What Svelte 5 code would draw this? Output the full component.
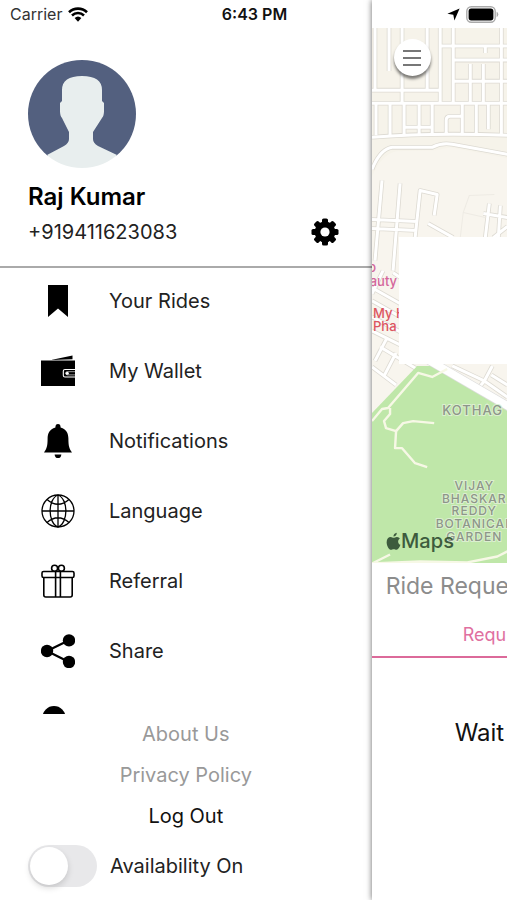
<script lang="ts">
  const menu = [
    { id: 'rides', label: 'Your Rides' },
    { id: 'wallet', label: 'My Wallet' },
    { id: 'notifications', label: 'Notifications' },
    { id: 'language', label: 'Language' },
    { id: 'referral', label: 'Referral' },
    { id: 'share', label: 'Share' },
    { id: 'support', label: '' },
  ];

  const streets = [
    // upper blocks
    'M3 0V62M17 0V43M30 0V75M55 0V62M68 0V75M81 0V75M129 0V107M98 36V75M111 36V75M113 18V25',
    'M0 62H68M68 18H135M81 32H135M81 53H135M0 75H135',
    'M4 75V107M18 75V107M32 75V107M47 75V107M60 75V107M90 75V107M104 75V107M116 75V101',
    'M32 99H60M74 107V92Q74 88 78 88H90M0 109Q60 104 135 107',
    'M0 141Q8 121 20 119L60 119Q70 114 80 116L135 126',
    // middle blocks
    'M10 152L3 232M28 155L21 242M0 191L45 193M0 200L45 202M43 209L48 162L65 166L62 187M56 195L81 209',
    'M117 175L113 209M128 177L126 209M111 185L135 189M135 198L121 209',
    // lower left blocks
    'M11 242L0 265M21 244L30 250M0 259L30 276M0 272L30 289M0 288L30 304M0 302L30 317M15 309L3 332M8 318L48 342M0 338L24 356M24 324L12 347',
    // beyond the highway
    'M80 337L112 352L135 368M120 337L112 352M112 352L104 362M119 346L135 356',
  ];
  const trails = [
    'M0 392L10 380L16 379L46 344L60 348L75 340',
    'M18 379V385L12 392L14 399L24 402L31 394L41 392L62 394',
    'M24 402L23 419H30L43 434L55 438',
    'M0 534L48 532L95 533L125 527L135 522M0 534L18 525',
  ];

  let available = $state(false);
</script>

<div class="screen">
  <header class="status">
    <div class="status-left">
      <span>Carrier</span>
      <svg width="20" height="15" viewBox="0 0 20 15" aria-hidden="true">
        <path d="M1 5.2a13 13 0 0 1 18 0" fill="none" stroke="#000" stroke-width="2.6" />
        <path d="M4 8.5a8.6 8.6 0 0 1 12 0" fill="none" stroke="#000" stroke-width="2.5" />
        <path d="M6.6 11.1a5 5 0 0 1 6.8 0L10 14.7z" />
      </svg>
    </div>
    <time>6:43 PM</time>
    <div class="status-right">
      <svg width="13" height="13" viewBox="0 0 13 13" aria-hidden="true">
        <path d="M12.6.4 7.4 12.6 6.3 6.8.4 5.8z" />
      </svg>
      <svg width="33" height="17" viewBox="0 0 33 17" aria-hidden="true">
        <rect x=".8" y=".8" width="28.4" height="15.4" rx="4.5" fill="#fff" stroke="#aaa" stroke-width="1.4" />
        <rect x="2.6" y="2.6" width="24.8" height="11.8" rx="2.6" />
        <path d="M30.6 5.8a3 3 0 0 1 0 5.4z" fill="#aaa" />
      </svg>
    </div>
  </header>

  <aside class="drawer">
    <section class="profile">
      <svg class="avatar" viewBox="0 0 108 108" role="img" aria-label="Profile photo">
        <clipPath id="round"><circle cx="54" cy="54" r="54" /></clipPath>
        <g clip-path="url(#round)">
          <path d="M0 0H108V96H0z" fill="#53607f" />
          <path
            d="M0 108V103L19 95 36 86Q41 83 41 79V72L34 58Q32 56 32 51V43L34 41V30Q34 16 54 16T74 30V41L76 43V51Q76 56 74 58L65 72V79Q65 83 70 86L89 95 108 103V108Z"
            fill="#e8eeee"
          />
        </g>
      </svg>
      <h1>Raj Kumar</h1>
      <div class="phone-row">
        <span>+919411623083</span>
        <button class="gear" aria-label="Settings">
          <svg width="28" height="28" viewBox="-14 -14 28 28">
            {#each [0, 45, 90, 135] as a}
              <rect x="-3" y="-13.5" width="6" height="27" rx="1.6" transform="rotate({a})" />
            {/each}
            <circle r="10.4" />
            <circle r="4.6" fill="#fff" />
          </svg>
        </button>
      </div>
    </section>

    <nav class="menu">
      {#each menu as item}
        <a href="#{item.id}" aria-label={item.label || 'Support'}>
          <svg class="icon" viewBox="0 0 34 34" aria-hidden="true">
            {#if item.id === 'rides'}
              <path d="M7 1H27V33L17 24.5 7 33z" />
            {:else if item.id === 'wallet'}
              <path d="M10 6 31.5 1.5V5.2zM0 6.5H34V32H0z" />
              <path d="M34 15.5H24Q22.3 15.5 22.3 17V21.5Q22.3 23 24 23H34" fill="none" stroke="#fff" stroke-width="1.1" />
              <path d="M34 17.7H26.5Q24.5 17.7 24.5 19.2T26.5 20.9H34" fill="none" stroke="#fff" stroke-width=".6" />
              <circle cx="26.3" cy="19.3" r="1.5" fill="#fff" />
            {:else if item.id === 'notifications'}
              <path d="M17 0Q19.6 0 19.6 3.4C25.5 5 27.4 9.5 27.4 14.5 27.4 22 28.2 24.5 31 28.6H3C5.8 24.5 6.6 22 6.6 14.5 6.6 9.5 8.5 5 14.4 3.4Q14.4 0 17 0z" />
              <path d="M13.6 30.4H20.4Q20 34 17 34T13.6 30.4z" />
            {:else if item.id === 'language'}
              <g fill="none" stroke="#000" stroke-width="1.3">
                <circle cx="17" cy="17" r="16" />
                <path d="M17 1V33M1 17H33M17 1C6.5 5 6.5 29 17 33M17 1C27.5 5 27.5 29 17 33M6 5.5Q17 15 28 5.5M6 28.5Q17 19 28 28.5" />
              </g>
            {:else if item.id === 'referral'}
              <g fill="none" stroke="#000" stroke-width="1.6">
                <rect x="1" y="7.5" width="32" height="6" rx="1.6" />
                <path d="M2.8 13.5V31Q2.8 33 4.8 33H29.2Q31.2 33 31.2 31V13.5M14.6 7.5V33M19.4 7.5V33" />
                <circle cx="13.6" cy="4.2" r="3" />
                <circle cx="20.4" cy="4.2" r="3" />
              </g>
            {:else if item.id === 'share'}
              <path d="M28 6.2 6 17 28 28" fill="none" stroke="#000" stroke-width="2.2" />
              <circle cx="28" cy="6.4" r="6.2" />
              <circle cx="6" cy="17" r="6.2" />
              <circle cx="28" cy="28" r="6.2" />
            {:else}
              <circle cx="13" cy="13.6" r="11.6" />
            {/if}
          </svg>
          <span>{item.label}</span>
        </a>
      {/each}
    </nav>

    <footer class="links">
      <a href="#about">About Us</a>
      <a href="#privacy">Privacy Policy</a>
      <a href="#logout" class="logout">Log Out</a>
      <label class="availability">
        <input type="checkbox" bind:checked={available} />
        <span>Availability On</span>
      </label>
    </footer>
  </aside>

  <main class="page">
    <div class="map">
      <svg class="tiles" viewBox="0 0 135 535" preserveAspectRatio="xMinYMin slice" role="img" aria-label="Map">
        <rect width="135" height="535" fill="#f6f3ea" />
        <path d="M0 148Q10 126 24 123L64 122 78 119 135 130V535H0z" fill="#f8f5ee" />
        <g fill="none" stroke-linejoin="round">
          {#each streets as d}
            <path {d} stroke="#dddad2" stroke-width="4.6" />
          {/each}
          {#each streets as d}
            <path {d} stroke="#fff" stroke-width="3" />
          {/each}
          <path d="M88 209L91 184 97 167 122 166M91 184L113 189" stroke="#eeebe4" />
        </g>
        <path d="M0 384L45 337H62L135 379V535H0z" fill="#bfe7a9" />
        <path d="M56 331L137 378" stroke="#ddd" stroke-width="9" />
        <path d="M56 331L137 378" stroke="#fff" stroke-width="7.6" />
        <g fill="none" stroke="#f7f8e6" stroke-width="2.4" stroke-linejoin="round">
          {#each trails as d}
            <path {d} />
          {/each}
        </g>
        <g class="place">
          <text x="70" y="386" class="town">KOTHAG</text>
          <g text-anchor="middle">
            <text x="102" y="461">VIJAY</text>
            <text x="102" y="474">BHASKAR</text>
            <text x="102" y="486">REDDY</text>
            <text x="102" y="499">BOTANICAL</text>
            <text x="102" y="512">GARDEN</text>
          </g>
        </g>
        <g class="shop">
          <text x="4" y="243" text-anchor="end">o</text>
          <text x="25" y="257" text-anchor="end">auty</text>
        </g>
        <g class="shop pharmacy">
          <text x="1" y="289">My H</text>
          <text x="1" y="302">Pha</text>
        </g>
        <g fill="#3d5b3d">
          <path d="M21.5 508.4C22.6 508.4 23.4 507.4 25 507.5 26.3 507.6 27.2 508.1 27.8 509 25.2 510.6 25.7 514.3 28.4 515.4 27.6 517.6 26.2 520.4 24.4 520.4 23.3 520.4 23 519.7 21.7 519.7S20 520.4 19 520.4C17 520.4 14.6 516.3 14.6 512.8 14.6 509.3 16.6 507.5 18.6 507.5 19.9 507.5 20.8 508.4 21.5 508.4zM21.4 507.2C21.2 505.2 22.8 503.5 24.7 503.3 24.9 505.4 23.2 507.2 21.4 507.2z" />
          <text x="29" y="519" class="brand">Maps</text>
        </g>
      </svg>
      <button class="burger" aria-label="Menu">
        <svg width="18" height="16" viewBox="0 0 18 16">
          <path d="M0 1H18M0 8H18M0 15H18" stroke="#777" stroke-width="1.8" />
        </svg>
      </button>
      <div class="card"></div>
    </div>
    <section class="requests">
      <h2>Ride Reque</h2>
      <button class="tab">Requ</button>
      <p>Wait</p>
    </section>
  </main>
</div>

<style>
  :global(body) {
    margin: 0;
    background: #fff;
    font-family: Inter, 'Liberation Sans', sans-serif;
    color: #222;
  }

  .screen {
    position: relative;
    display: flex;
    height: 100vh;
    overflow: hidden;
  }

  a {
    color: inherit;
    text-decoration: none;
  }

  button {
    border: 0;
    padding: 0;
    background: none;
    font: inherit;
    cursor: pointer;
  }

  svg {
    display: block;
  }

  .status {
    position: absolute;
    z-index: 2;
    inset: 0 0 auto;
    display: grid;
    grid-template-columns: 1fr auto 1fr;
    align-items: center;
    height: 28px;
    padding: 0 8px 0 10px;
    font-size: 16px;
    color: #333;
  }

  .status-left,
  .status-right {
    display: flex;
    align-items: center;
    gap: 6px;
  }

  .status-right {
    justify-content: flex-end;
  }

  .status time {
    font-weight: 600;
    color: #111;
  }

  .drawer {
    display: flex;
    flex-direction: column;
    flex: 0 0 73.3%;
    min-width: 0;
    background: #fff;
  }

  .profile {
    padding: 60px 33px 20px 28px;
    border-bottom: 2px solid #aaa;
  }

  .avatar {
    width: 108px;
    height: 108px;
  }

  h1 {
    margin: 14px 0 6px;
    font-size: 24px;
    line-height: 30px;
    font-weight: 600;
    color: #000;
  }

  .phone-row {
    display: flex;
    align-items: center;
    justify-content: space-between;
    font-size: 20px;
    line-height: 28px;
  }

  .menu {
    display: flex;
    flex: 1;
    flex-direction: column;
    gap: 4px;
    min-height: 0;
    overflow: hidden;
    font-size: 20px;
  }

  .menu a {
    display: flex;
    flex: 0 0 66px;
    align-items: center;
    gap: 34px;
    padding-left: 41px;
  }

  .icon {
    width: 34px;
    height: 34px;
  }

  .links {
    padding-bottom: 13px;
    font-size: 20px;
    line-height: 41px;
    text-align: center;
    color: #999;
  }

  .links a {
    display: block;
  }

  .links .logout {
    color: #111;
  }

  .availability {
    display: flex;
    align-items: center;
    gap: 13px;
    margin: 8px 0 0 28px;
    color: #222;
  }

  .availability input {
    appearance: none;
    width: 69px;
    height: 42px;
    margin: 0;
    padding: 2px;
    box-sizing: border-box;
    border-radius: 21px;
    background: #e8e8ea;
  }

  .availability input::before {
    content: '';
    display: block;
    width: 38px;
    height: 38px;
    border-radius: 50%;
    background: #fff;
    box-shadow: 0 3px 6px rgba(0, 0, 0, 0.15);
  }

  .availability input:checked {
    background: #4cd964;
  }

  .availability input:checked::before {
    margin-left: auto;
  }

  .page {
    position: relative;
    display: flex;
    flex: 1;
    flex-direction: column;
    min-width: 0;
    padding-top: 28px;
    background: #fff;
    box-shadow: 0 0 6px rgba(0, 0, 0, 0.6);
  }

  .map {
    position: relative;
    flex: 1;
    min-height: 0;
    overflow: hidden;
  }

  .tiles {
    width: 100%;
    height: 100%;
  }

  .place {
    font-size: 12px;
    font-weight: 500;
    letter-spacing: 1px;
    fill: #8d9689;
    stroke: #dcefd0;
    stroke-width: 2px;
    paint-order: stroke;
  }

  .town {
    font-size: 13px;
  }

  .shop {
    font-size: 13px;
    font-weight: 500;
    fill: #d4679c;
  }

  .pharmacy {
    fill: #dc5560;
  }

  .brand {
    font-size: 20px;
    font-weight: 500;
  }

  .burger {
    position: absolute;
    top: 11px;
    left: 22px;
    display: grid;
    place-items: center;
    width: 37px;
    height: 37px;
    border-radius: 50%;
    background: #fff;
    box-shadow: 0 3px 3px rgba(0, 0, 0, 0.5);
  }

  .card {
    position: absolute;
    top: 209px;
    right: 0;
    left: 27px;
    height: 127px;
    background: #fff;
  }

  .requests {
    padding-bottom: 152px;
    overflow: hidden;
    white-space: nowrap;
  }

  h2 {
    margin: 8px 0 21px 14px;
    font-size: 23px;
    line-height: 30px;
    font-weight: 400;
    color: #8c8c8c;
  }

  .tab {
    width: 100%;
    padding: 0 0 8px 91px;
    border-bottom: 2px solid #dc6a9a;
    font-size: 18px;
    line-height: 26px;
    text-align: left;
    color: #e0709f;
  }

  .requests p {
    margin: 60px 0 0 83px;
    font-size: 24px;
    line-height: 30px;
    color: #111;
  }
</style>
